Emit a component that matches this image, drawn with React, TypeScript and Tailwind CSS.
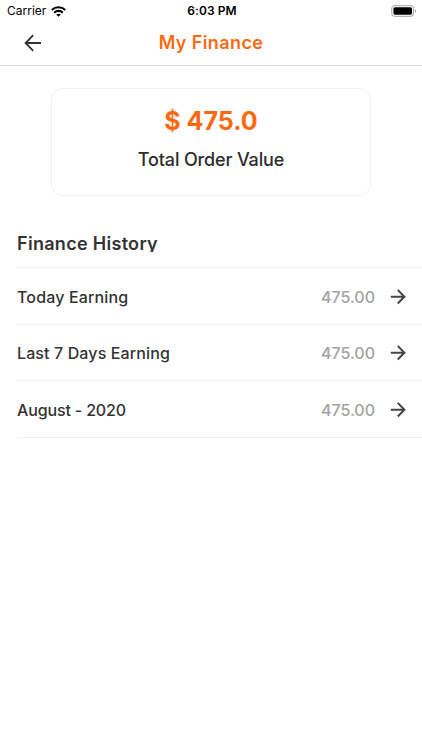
const history = [
  { label: "Today Earning", amount: "475.00", spacing: "tracking-[0.15px]" },
  { label: "Last 7 Days Earning", amount: "475.00", spacing: "tracking-[0.12px]" },
  { label: "August - 2020", amount: "475.00", spacing: "tracking-[-0.15px]" },
]

function WifiIcon() {
  return (
    <svg width="15" height="11" viewBox="0 0 15 11" fill="none" stroke="#000" strokeWidth="2.2">
      <path d="M0.8 4C4.5 0.3 10.5 0.3 14.2 4" />
      <path d="M3.2 6.7C5.6 4.3 9.4 4.3 11.8 6.7" />
      <path d="M7.5 10.8L5.2 8.6C6.5 7.4 8.5 7.4 9.8 8.6Z" fill="#000" stroke="none" />
    </svg>
  )
}

function BatteryIcon() {
  return (
    <svg width="26" height="12" viewBox="0 0 26 12" fill="none">
      <rect x="0.7" y="0.7" width="21.8" height="10.6" rx="3" stroke="#b4b4b4" strokeWidth="1.2" />
      <rect x="2.4" y="2.3" width="18.6" height="7.4" rx="1.6" fill="#000" />
      <path d="M24 4.2C25.4 4.7 25.4 7.3 24 7.8Z" fill="#999" />
    </svg>
  )
}

function ArrowRight() {
  return (
    <svg width="16" height="16" viewBox="0 0 16 16" fill="none" stroke="#444" strokeWidth="2">
      <path d="M0.8 7.7H14.3M7.8 0.9L14.4 7.7L7.8 14.5" />
    </svg>
  )
}

function StatusBar() {
  return (
    <div className="grid h-[22px] grid-cols-3 items-center pl-[7px] pr-[5px] text-black">
      <div className="flex items-center gap-[5px]">
        <span className="text-[12px] leading-[22px]">Carrier</span>
        <WifiIcon />
      </div>
      <span className="text-center text-[12px] font-semibold leading-[22px] tracking-[0.1px]">6:03 PM</span>
      <div className="flex justify-end">
        <BatteryIcon />
      </div>
    </div>
  )
}

function Header() {
  return (
    <header className="grid h-11 grid-cols-[60px_1fr_60px] items-center border-b border-[#dedede] pb-0.5">
      <button className="flex pl-6">
        <svg width="18" height="18" viewBox="0 0 18 18" fill="none" stroke="#333" strokeWidth="1.8">
          <path d="M17 9H2M9.2 1.2L1.6 9L9.2 16.8" />
        </svg>
      </button>
      <h1 className="text-center text-[18px] font-semibold leading-6 tracking-[0.4px] text-[#f96a10]">My Finance</h1>
    </header>
  )
}

export default function App() {
  return (
    <div className="h-[750px] w-[422px] overflow-hidden bg-white font-['Inter',sans-serif] text-[#333]">
      <StatusBar />
      <Header />

      <section className="mx-[51px] mt-[22px] h-[108px] rounded-xl border border-[#f1f1f1] pt-4 text-center">
        <p className="text-[25px] font-bold leading-8 text-[#f96a10]">$ 475.0</p>
        <p className="mt-[11px] text-[18px] font-medium leading-6 tracking-[-0.15px] text-[#2d2d2d]">
          Total Order Value
        </p>
      </section>

      <section className="mt-[34px] pl-[17px]">
        {/* tight line box trims the descender */}
        <h2 className="h-[22px] overflow-hidden text-[18px] font-semibold leading-[27px] tracking-[0.3px]">
          Finance History
        </h2>
        <ul className="mt-[15px] border-t border-[#f1f1f1]">
          {history.map((item) => (
            <li
              key={item.label}
              className="flex h-[56.7px] items-center border-b border-[#f1f1f1] pt-[1.4px] pr-4"
            >
              <span className={`flex-1 text-[16px] font-medium ${item.spacing}`}>{item.label}</span>
              <span className="mr-[15px] text-[16px] font-medium text-[#a2a2a2]">{item.amount}</span>
              <ArrowRight />
            </li>
          ))}
        </ul>
      </section>
    </div>
  )
}
